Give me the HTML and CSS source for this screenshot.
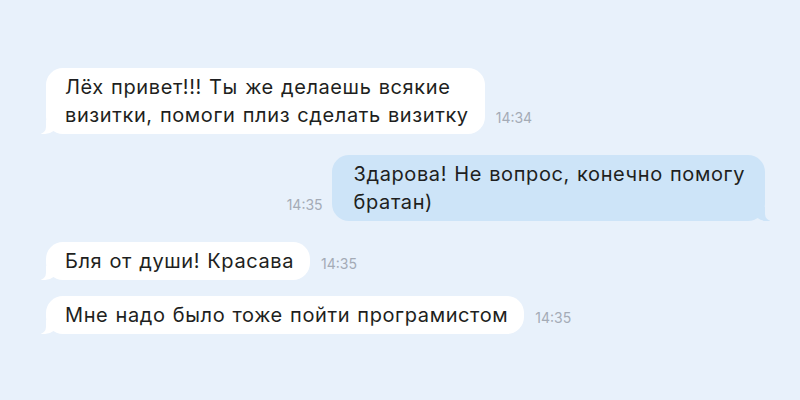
FILE: index.html
```html
<!DOCTYPE html>
<html lang="ru">
<head>
    <meta charset="UTF-8">
    <meta name="viewport" content="width=device-width, initial-scale=1.0">
    <title>Переписка</title>
    <link rel="stylesheet" href="styles.css">
</head>
<body>
    <div class="chat">
        <div class="row in">
            <div class="bubble">Лёх привет!!! Ты же делаешь всякие<br>визитки, помоги плиз сделать визитку</div>
            <span class="time">14:34</span>
        </div>
        <div class="row out">
            <span class="time">14:35</span>
            <div class="bubble">Здарова! Не вопрос, конечно помогу<br>братан)</div>
        </div>
        <div class="row in">
            <div class="bubble">Бля от души! Красава</div>
            <span class="time">14:35</span>
        </div>
        <div class="row in next">
            <div class="bubble">Мне надо было тоже пойти програмистом</div>
            <span class="time">14:35</span>
        </div>
    </div>
</body>
</html>
```

FILE: styles.css
```css
body {
    margin: 0;
    background-color: #e8f1fb;
    font-family: Inter, "Open Sans", Arial, sans-serif;
    color: #1e1f21;
}
.chat {
    display: flex;
    flex-direction: column;
    gap: 21px;
    padding: 68px 35px 0 46px;
}
.row {
    display: flex;
    align-items: flex-end;
    gap: 11px;
}
.row.next {
    margin-top: -5px;
}
.row.out {
    justify-content: flex-end;
    gap: 9px;
}
.bubble {
    position: relative;
    padding: 5px 16px 5px 19px;
    font-size: 20px;
    line-height: 28px;
    letter-spacing: 0.6px;
    word-spacing: 1px;
    background-color: #fff;
    border-radius: 17px;
}
.row.out .bubble {
    padding: 5px 20px 5px 22px;
    background-color: #cde4f8;
}
/* хвостик сообщения */
.bubble::before,
.bubble::after {
    content: "";
    position: absolute;
    bottom: 0;
    height: 14px;
}
.row.in .bubble::before {
    left: -5px;
    width: 16px;
    background-color: #fff;
    border-bottom-right-radius: 12px 10px;
}
.row.in .bubble::after {
    left: -11px;
    width: 11px;
    background-color: #e8f1fb;
    border-bottom-right-radius: 7px;
}
.row.out .bubble::before {
    right: -5px;
    width: 16px;
    background-color: #cde4f8;
    border-bottom-left-radius: 12px 10px;
}
.row.out .bubble::after {
    right: -11px;
    width: 11px;
    background-color: #e8f1fb;
    border-bottom-left-radius: 7px;
}
.time {
    padding-bottom: 8px;
    font-size: 14px;
    color: #a4abb6;
}
```
